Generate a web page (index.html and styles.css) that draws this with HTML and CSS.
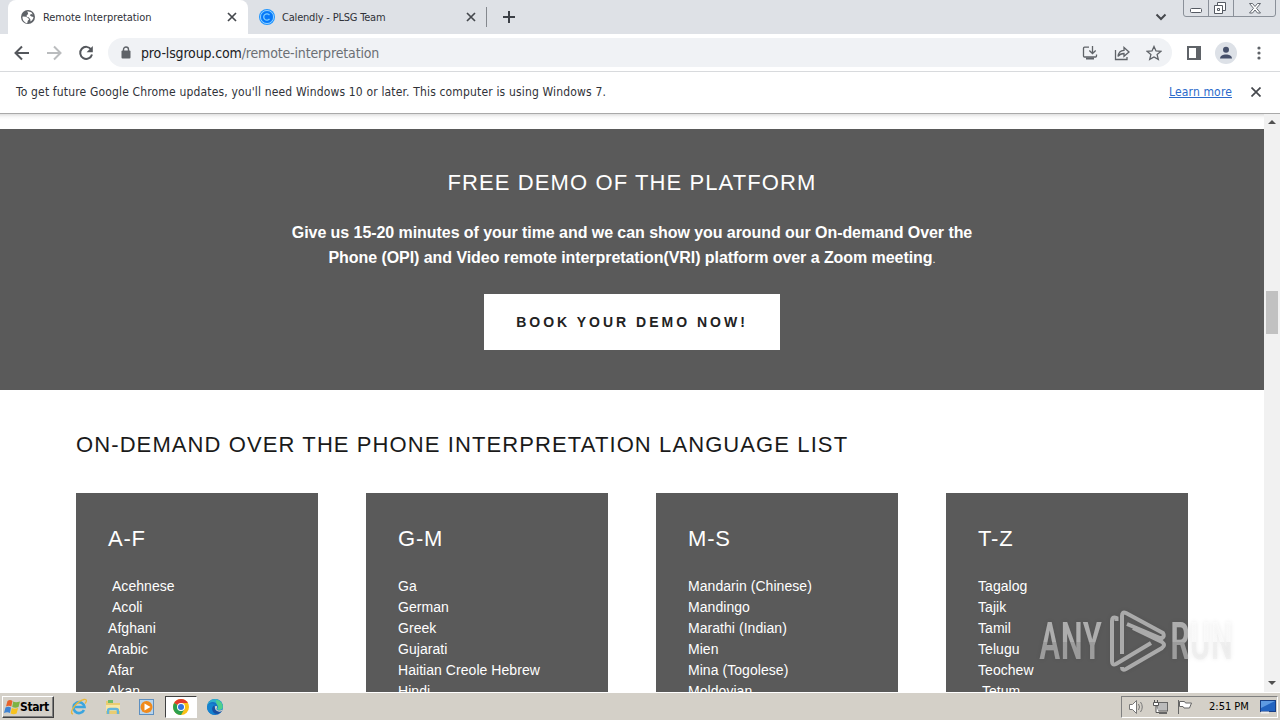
FILE: index.html
```
<!DOCTYPE html>
<html lang="en">

<head>
    <meta charset="UTF-8">
    <meta name="viewport" content="width=device-width, initial-scale=1.0">
    <title>Remote Interpretation</title>
    <link rel="stylesheet" href="styles.css">
</head>

<body>
    <!-- Tabs -->
    <div class="tabs">
        <div class="tab active">
            <svg class="favicon" width="16" height="16" viewBox="0 0 16 16">
                <circle cx="8" cy="8" r="7" fill="#5f6368"/>
                <path d="M3 7.500l3 .2 2 1.300 1.200 1.200-1.400 1.600-.6 2.400C4.500 13.700 2.200 11 2.500 7.700z M7.300 2.300l4 .9 1.500 2.300-1.800-.5-1.200 1.200 1.700 1.300 2 .5c-.3 2-1.500 3.700-3 4.600l-.2-2.300-1.600-2-2-.3V6.300L8.200 5z" fill="#fff"/>
            </svg>
            <span class="tab-title">Remote Interpretation</span>
            <svg class="close" width="10" height="10" viewBox="0 0 10 10"><path d="M1 1l8 8M9 1l-8 8"/></svg>
        </div>
        <div class="tab">
            <svg class="favicon" width="16" height="16" viewBox="0 0 16 16">
                <circle cx="8" cy="8" r="8" fill="#2196ff"/>
                <circle cx="8" cy="8" r="6.600" fill="none" stroke="#a9d8ff" stroke-width=".8"/>
                <circle cx="8" cy="8" r="5.800" fill="#0878f8"/>
                <path d="M10.500 6.100a3.200 3.200 0 1 0 0 3.800" fill="none" stroke="#7fd0ff" stroke-width="1.300"/>
            </svg>
            <span class="tab-title team">Calendly - PLSG Team</span>
            <svg class="close" width="10" height="10" viewBox="0 0 10 10"><path d="M1 1l8 8M9 1l-8 8"/></svg>
        </div>
        <div class="divider"></div>
        <svg class="new-tab" width="12" height="12" viewBox="0 0 12 12"><path d="M6 0v12M0 6h12"/></svg>
        <svg class="tab-search" width="12" height="8" viewBox="0 0 12 8"><path d="M1.500 1.500L6 6l4.500-4.500"/></svg>
        <svg class="window-buttons" width="93" height="17" viewBox="0 0 93 17">
            <path d="M.5 0v14q0 2.500 2.500 2.500h87q2.500 0 2.500-2.500V0M25.500 0v16M50.500 0v16" fill="none" stroke="#8a9099"/>
            <rect x="7.500" y="8.500" width="11" height="4" rx="1" fill="#fff" stroke="#555a63"/>
            <path d="M34.500 2.500h8v8h-8z" fill="#fff" stroke="#555a63"/>
            <path d="M31.500 5.500h8v8h-8zM34.500 8.500h2v2h-2z" fill="#fff" stroke="#555a63"/>
            <path d="M66.500 3.500h3l2.500 3 2.500-3h3l-4 4.800 4 4.700h-3l-2.500-3-2.500 3h-3l4-4.700z" fill="#fff" stroke="#555a63" stroke-width=".9"/>
        </svg>
    </div>

    <!-- Toolbar -->
    <div class="toolbar">
        <svg class="nav" width="16" height="16" viewBox="0 0 16 16"><path d="M15 8H2M8 1.500L1.500 8 8 14.500"/></svg>
        <svg class="nav disabled" width="16" height="16" viewBox="0 0 16 16"><path d="M1 8h13M8 1.500L14.500 8 8 14.500"/></svg>
        <svg class="nav" width="16" height="16" viewBox="0 0 16 16"><path d="M13.200 4.500A6 6 0 1 0 14 9.500"/><path class="solid" d="M14.800 1v6.200H8.600z"/></svg>
        <div class="omnibox">
            <svg class="lock" width="10" height="13" viewBox="0 0 10 13"><path d="M2.500 6V3.500a2.500 2.500 0 0 1 5 0V6" fill="none" stroke="#5f6368" stroke-width="1.400"/><rect x=".5" y="4.500" width="9" height="8" rx="1" fill="#5f6368"/></svg>
            <div class="url">pro-lsgroup.com<span>/remote-interpretation</span></div>
            <svg class="icon" width="16" height="16" viewBox="0 0 16 16"><path d="M7 2.200H2.500q-1 0-1 1V11q0 1 1 1h11q1 0 1-1V9.500M10.500 1v7M7.300 5.500l3.200 3 3.200-3"/><path d="M4 13.500h8" stroke-width="2"/></svg>
            <svg class="icon" width="16" height="16" viewBox="0 0 16 16"><path d="M1.500 5v9.500H13V12M4 11.500c.4-4 2.600-6 6-6.200V2.500L15 7l-5 4.300V8.500c-2.500 0-4.500.8-6 3z"/></svg>
            <svg class="icon star" width="16" height="16" viewBox="0 0 16 16"><path d="M8 1.500l2 4.500 4.800.4-3.700 3.200 1.200 4.800L8 11.900l-4.300 2.500 1.200-4.800L1.200 6.400 6 6z"/></svg>
        </div>
        <svg class="panel" width="14" height="14" viewBox="0 0 14 14"><path d="M1 1h12v12H1z" fill="#fff" stroke="#5f6368" stroke-width="2"/><path d="M9 0h5v14H9z" fill="#5f6368"/></svg>
        <svg class="avatar" width="22" height="22" viewBox="0 0 22 22"><circle cx="11" cy="11" r="11" fill="#dde1e7"/><circle cx="11" cy="7.800" r="3" fill="#46506a"/><path d="M5 16.500c0-5.500 12-5.500 12 0z" fill="#46506a"/></svg>
        <svg class="menu" width="4" height="14" viewBox="0 0 4 14"><circle cx="2" cy="2" r="1.600"/><circle cx="2" cy="7" r="1.600"/><circle cx="2" cy="12" r="1.600"/></svg>
    </div>

    <!-- Update notice -->
    <div class="infobar">
        <span class="notice">To get future Google Chrome updates, you'll need Windows 10 or later. This computer is using Windows 7.</span>
        <a class="learn">Learn more</a>
        <svg class="close" width="10" height="10" viewBox="0 0 10 10"><path d="M.5.5l9 9M9.500.5l-9 9"/></svg>
    </div>

    <div class="viewport">
        <div class="page">
            <section class="demo">
                <h2>FREE DEMO OF THE PLATFORM</h2>
                <p><b>Give us 15-20 minutes of your time and we can show you around our On-demand Over the<br>Phone (OPI) and Video remote interpretation(VRI) platform over a Zoom meeting</b><small>.</small></p>
                <a class="book">BOOK YOUR DEMO NOW!</a>
            </section>
            <section class="languages">
                <h2>ON-DEMAND OVER THE PHONE INTERPRETATION LANGUAGE LIST</h2>
                <div class="cards">
                    <div class="card">
                        <h3>A-F</h3>
                        <p>&nbsp;Acehnese<br>&nbsp;Acoli<br>Afghani<br>Arabic<br>Afar<br>Akan</p>
                    </div>
                    <div class="card">
                        <h3>G-M</h3>
                        <p>Ga<br>German<br>Greek<br>Gujarati<br>Haitian Creole Hebrew<br>Hindi</p>
                    </div>
                    <div class="card">
                        <h3>M-S</h3>
                        <p>Mandarin (Chinese)<br>Mandingo<br>Marathi (Indian)<br>Mien<br>Mina (Togolese)<br>Moldovian</p>
                    </div>
                    <div class="card">
                        <h3>T-Z</h3>
                        <p>Tagalog<br>Tajik<br>Tamil<br>Telugu<br>Teochew<br>&nbsp;Tetum</p>
                    </div>
                </div>
            </section>
        </div>
        <div class="scrollbar">
            <svg width="8" height="4" viewBox="0 0 8 4"><path d="M0 4l4-4 4 4z"/></svg>
            <div class="thumb"></div>
            <svg width="8" height="4" viewBox="0 0 8 4"><path d="M0 0l4 4 4-4z"/></svg>
        </div>
    </div>

    <!-- Taskbar -->
    <div class="taskbar">
        <div class="start">
            <svg width="16" height="16" viewBox="0 0 16 16">
                <path d="M3.500 2q2.500-1.800 5 0L7.300 7.500q-2.500-1.500-5.300 0z" fill="#e8622a"/>
                <path d="M9.200 2.500q2.500 1.500 6.800 0l-1.500 5.500q-3 1.500-6.300 0z" fill="#7db343"/>
                <path d="M1.500 8.500q2.800-1.500 5.500 0l-1 5.500q-2.700-1.500-6 0z" fill="#3f83d3"/>
                <path d="M7.800 9q2.500 1.500 6.300 0l-1.500 5.500q-3 1.500-6 0z" fill="#f7c21e"/>
            </svg>
            <span>Start</span>
        </div>
        <div class="launch">
            <svg width="18" height="18" viewBox="0 0 18 18">
                <path d="M14 12a5.500 5.500 0 1 1 .5-3H5" fill="none" stroke="#3ba5df" stroke-width="2.600"/>
                <path d="M3 16C-2 15 7 3 14 1.500c4-.7 2 3 1 4" fill="none" stroke="#e9b83a" stroke-width="1.300"/>
            </svg>
        </div>
        <div class="launch">
            <svg width="18" height="18" viewBox="0 0 18 18">
                <path d="M2 3h5l1 2h8v11H2z" fill="#e9cc71"/>
                <path d="M4 2h5v3H4z" fill="#6fbb67"/>
                <path d="M2 7h14v6H2z" fill="#f8e7a5"/>
                <path d="M4 16v-3q0-2 2-2h6q2 0 2 2v3" fill="none" stroke="#62b5dc" stroke-width="2.400"/>
            </svg>
        </div>
        <div class="launch">
            <svg width="18" height="18" viewBox="0 0 18 18">
                <rect x="1.500" y="1.500" width="14" height="15" fill="#b8d4ec" stroke="#5d8fc0"/>
                <circle cx="8.500" cy="9" r="6" fill="#f08a1c"/>
                <path d="M6.500 5.500l6 3.500-6 3.500z" fill="#fff"/>
            </svg>
        </div>
        <div class="launch pressed">
            <svg width="16" height="16" viewBox="0 0 16 16">
                <circle cx="8" cy="8" r="8" fill="#fbc116"/>
                <path d="M8 8L1.100 4A8 8 0 0 1 14.900 4H8z" fill="#e33b2e"/>
                <path d="M8 8L1.100 4A8 8 0 0 0 8 16l3.500-6z" fill="#2da04e"/>
                <circle cx="8" cy="8" r="4" fill="#fff"/>
                <circle cx="8" cy="8" r="3" fill="#3474e0"/>
            </svg>
        </div>
        <div class="launch">
            <svg width="16" height="16" viewBox="0 0 16 16">
                <circle cx="8" cy="8" r="8" fill="#1670c5"/>
                <path d="M0 8C1 3 8 1 10.500 6c1 3-1 3-.5 4.500 1 1.500 4 1 5.500-.5C17 3 12 0 8 0S.5 3 0 8z" fill="#2fb0cc"/>
                <path d="M9 1c4 0 7.500 4 6.500 8-1 2-4 2-5 1 1-1 1-3-1-5z" fill="#4fcf8c"/>
                <path d="M6.500 6.500c-3 4-.5 8 4 8.500 2-.5 4-2 4.700-3.200-4 1.600-7.700-.3-7.500-3.300z" fill="#1a4fa0"/>
                <path d="M8 7.500c1-.8 2.500-.3 2 1-.8 1.300-.4 2.200.7 2.700 1.500.6 3.300.3 4.500-.5l-.4 1.500c-3.500 1.600-7.500-1-6.800-4.700z" fill="#d4d0c8"/>
                <path d="M0 8c1-4 6-4.500 8-2-4 1-4.500 6 .5 9.900C4 16 0 13 0 8z" fill="#1583cf"/>
            </svg>
        </div>
        <div class="tray">
            <svg width="17" height="16" viewBox="0 0 17 16"><path d="M1.500 5.500h3l4-4v13l-4-4h-3z" fill="#fff" stroke="#777"/><path d="M10.500 5q2 3 0 6M12.500 3q3.500 5 0 10" fill="none" stroke="#777"/></svg>
            <svg width="17" height="16" viewBox="0 0 17 16"><rect x="5" y="3.500" width="10.500" height="8.500" fill="#bbb" stroke="#666"/><path d="M7 14h8" stroke="#666" stroke-width="2"/><path d="M1.500 3.500h5v3h-5zM2.500 1v2M5.500 1v2M4 7v6.500h3" fill="#fff" stroke="#555"/></svg>
            <svg width="17" height="16" viewBox="0 0 17 16"><path d="M2.500 1v14" stroke="#666"/><path d="M3.500 2.500h5l1 1.500h6l-2 5H8l-1-1.500H3.500z" fill="#fff" stroke="#666"/></svg>
            <span class="clock">2:51 PM</span>
            <svg class="desktop" width="16" height="14" viewBox="0 0 16 14"><rect x=".5" y=".5" width="15" height="11" fill="#2263c0" stroke="#173e86"/><path d="M1 1h14L1 8z" fill="#5e9ae2"/><path d="M1 12.500h8" stroke="#eee" stroke-width="2"/></svg>
        </div>
    </div>

    <!-- Watermark over the page -->
    <svg class="watermark" width="200" height="70" viewBox="0 0 200 70">
        <defs>
            <linearGradient id="fade" x1="0" y1="15" x2="0" y2="55" gradientUnits="userSpaceOnUse">
                <stop offset=".55" stop-color="#fff" stop-opacity=".52"/>
                <stop offset=".55" stop-color="#e8e8e8" stop-opacity=".48"/>
            </linearGradient>
        </defs>
        <g fill="url(#fade)">
            <text x="3" y="54" textLength="63" lengthAdjust="spacingAndGlyphs">ANY</text>
            <text x="134" y="54" textLength="63" lengthAdjust="spacingAndGlyphs">RUN</text>
        </g>
        <path d="M80.500 16v-3q-4.500-2-4.500 3v40q0 5 4 3l35-21M86 49V11q0-5 4-3l37 20q2 3-1 5h-2L91 19M97 23l29 14q4 3 0 6L90 64q-4 2-4-2"/>
    </svg>
</body>

</html>
```
FILE: styles.css
```
* {
    box-sizing: border-box;
}

body {
    margin: 0;
    width: 1280px;
    height: 720px;
    overflow: hidden;
    display: flex;
    flex-direction: column;
    background-color: white;
    font-family: "DejaVu Sans Condensed", "DejaVu Sans", sans-serif;
    font-stretch: condensed;
    color: #303238;
}

svg {
    flex: none;
    display: block;
}

.tabs {
    height: 34px;
    flex: none;
    display: flex;
    align-items: center;
    background-color: #dee1e6;
    padding-left: 8px;
}

.tab {
    width: 239px;
    height: 34px;
    display: flex;
    align-items: center;
    padding: 0 11px 0 11px;
    font-size: 11px;
}

.tab.active {
    width: 240px;
    background-color: white;
    border-radius: 8px 8px 0 0;
    padding-left: 12px;
}

.tab-title {
    flex: 1;
    margin-left: 7px;
    white-space: nowrap;
    letter-spacing: -0.05px;
}

.tab-title.team {
    letter-spacing: -0.2px;
}

.close {
    fill: none;
    stroke: #45484d;
    stroke-width: 1.7;
}

.divider {
    width: 1px;
    height: 20px;
    background-color: #84888e;
    margin-left: -1px;
}

.new-tab {
    margin-left: 16px;
    fill: none;
    stroke: #3c4046;
    stroke-width: 2;
}

.tab-search {
    margin-left: auto;
    fill: none;
    stroke: #45484d;
    stroke-width: 2;
}

.window-buttons {
    align-self: flex-start;
    margin: 0 4px 0 16px;
}

.toolbar {
    height: 38px;
    flex: none;
    display: flex;
    align-items: center;
    padding-left: 14px;
    border-bottom: 1px solid #d8dadd;
}

.nav {
    margin-right: 16px;
    fill: none;
    stroke: #54575c;
    stroke-width: 2;
}

.nav.disabled {
    stroke: #babcbe;
}

.nav .solid {
    fill: #54575c;
    stroke: none;
}

.omnibox {
    width: 1064px;
    height: 29px;
    margin-left: -2px;
    border-radius: 15px;
    background-color: #f0f2f5;
    display: flex;
    align-items: center;
    padding: 0 10px 0 13px;
}

.url {
    flex: 1;
    margin-left: 10px;
    font-size: 14px;
    letter-spacing: -0.15px;
    color: #202124;
}

.url span {
    color: #6b6f74;
}

.icon {
    margin-left: 16px;
    fill: none;
    stroke: #5f6368;
    stroke-width: 1.3;
}

.panel {
    margin-left: 15px;
}

.avatar {
    margin-left: 14px;
}

.menu {
    margin-left: 20px;
    fill: #5f6368;
}

.infobar {
    height: 41px;
    flex: none;
    display: flex;
    align-items: center;
    padding: 0 19px 2px 16px;
    font-size: 12px;
}

.notice {
    letter-spacing: 0.16px;
}

.learn {
    margin-left: auto;
    margin-right: 19px;
    letter-spacing: 0.15px;
    color: #2a6acb;
    text-decoration: underline;
}

.viewport {
    height: 579px;
    flex: none;
    display: flex;
    border-top: 1px solid #a9a9a9;
    overflow: hidden;
    font-family: "Liberation Sans", Arial, sans-serif;
}

.page {
    width: 1264px;
    background: linear-gradient(#e0e0e0, #f8f8f8 3px, white 6px);
    padding-top: 15px;
}

.demo {
    height: 261px;
    background-color: #5a5a5a;
    color: white;
    text-align: center;
    padding-top: 40px;
    font-size: 16px;
}

h2,
h3 {
    margin: 0;
    font-size: 22px;
    line-height: 27px;
    font-weight: normal;
    letter-spacing: 1.1px;
}

h3 {
    letter-spacing: 0.8px;
}

.demo p {
    margin: 24px 0;
    line-height: 25px;
    letter-spacing: -0.06px;
}

.demo small {
    font-size: 11px;
    line-height: 0;
}

.book {
    display: block;
    width: 296px;
    height: 56px;
    margin: 0 auto;
    line-height: 57px;
    background-color: white;
    color: #222;
    font-size: 14px;
    font-weight: bold;
    letter-spacing: 3px;
}

.languages {
    padding: 41px 76px 0;
    color: #1a1a1a;
}

.cards {
    display: flex;
    gap: 48px;
    margin-top: 35px;
}

.card {
    width: 242px;
    height: 300px;
    padding: 32px;
    background-color: #5a5a5a;
    color: white;
}

.card p {
    margin: 24px 0 0;
    font-size: 14px;
    line-height: 21px;
    letter-spacing: 0.05px;
    white-space: nowrap;
}

.scrollbar {
    width: 16px;
    background-color: #f1f1f1;
    display: flex;
    flex-direction: column;
    align-items: center;
    padding: 6px 0 7px;
    fill: #505050;
}

.thumb {
    width: 12px;
    height: 43px;
    margin: 167px 0 auto;
    background-color: #c1c1c1;
}

.taskbar {
    height: 28px;
    flex: none;
    display: flex;
    align-items: center;
    background-color: #d4d0c8;
    border-top: 1px solid white;
    padding: 2px;
}

.start {
    width: 52px;
    height: 22px;
    display: flex;
    align-items: center;
    border: 1px solid;
    border-color: white #404040 #404040 white;
    box-shadow: inset -1px -1px #808080;
    padding-left: 1px;
    font-size: 12px;
    font-weight: bold;
    letter-spacing: -0.4px;
    color: black;
    margin-right: 9px;
}

.launch {
    width: 32px;
    height: 22px;
    margin-right: 2px;
    display: flex;
    align-items: center;
    justify-content: center;
}

.launch.pressed {
    background-color: white;
    border: 1px solid;
    border-color: #404040 white white #404040;
}

.tray {
    width: 157px;
    height: 22px;
    margin-left: auto;
    display: flex;
    align-items: center;
    gap: 7px;
    border: 1px solid;
    border-color: #808080 white white #808080;
    padding-left: 6px;
}

.clock {
    margin-left: 9px;
    font-size: 11px;
    color: black;
    white-space: nowrap;
}

.desktop {
    margin-left: 4px;
}

.watermark {
    position: absolute;
    left: 1036px;
    top: 605px;
    fill: none;
    stroke: rgba(255, 255, 255, 0.5);
    stroke-width: 4;
    filter: drop-shadow(0 0 2px rgba(0, 0, 0, 0.15));
}

.watermark text {
    font-family: Roboto, sans-serif;
    font-size: 52px;
    font-weight: 500;
    stroke: none;
}
```
